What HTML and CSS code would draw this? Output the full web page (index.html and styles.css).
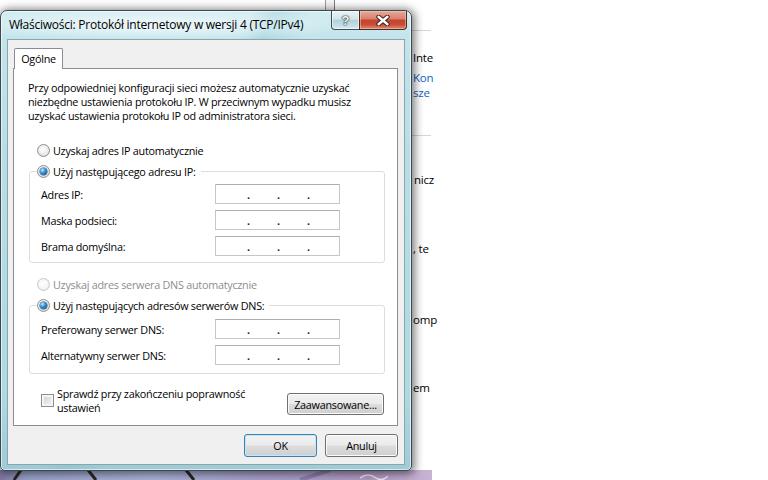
FILE: index.html
```html
<!DOCTYPE html>
<html lang="pl">
<head>
<meta charset="utf-8">
<title>Właściwości: Protokół internetowy w wersji 4 (TCP/IPv4)</title>
<link rel="stylesheet" href="styles.css">
</head>
<body>
<div class="desktop">
  <div class="bgwin">
    <div class="bgwin-edge"></div>
    <div class="bgtext">
      <div class="bg-rule rule-top"></div>
      <p class="bg-line line-inte">Inte</p>
      <p class="bg-line link line-kon">Kon</p>
      <p class="bg-line link">sze</p>
      <div class="bg-rule rule-mid"></div>
      <p class="bg-line line-nicz">nicz</p>
      <p class="bg-line line-te">, te</p>
      <p class="bg-line line-omp">omp</p>
      <p class="bg-line line-em">em</p>
    </div>
  </div>

  <div class="wallpaper">
    <svg width="432" height="10" viewBox="0 0 432 10">
      <defs>
        <linearGradient id="wp" x1="0" y1="0" x2="1" y2="0">
          <stop offset="0" stop-color="#7f76a2"/>
          <stop offset="0.06" stop-color="#9aa2cc"/>
          <stop offset="0.35" stop-color="#aab3d8"/>
          <stop offset="0.6" stop-color="#a79fca"/>
          <stop offset="0.85" stop-color="#b39ac4"/>
          <stop offset="1" stop-color="#c7b4d2"/>
        </linearGradient>
      </defs>
      <rect width="432" height="10" fill="url(#wp)"/>
      <path d="M14 10 L21 0" stroke="#2c2620" stroke-width="3"/>
      <path d="M88 0 L96 10" stroke="#2c2620" stroke-width="3"/>
      <path d="M186 0 L194 10" stroke="#2c2620" stroke-width="3"/>
      <path d="M360 8 q8 -6 16 0 q6 4 12 -2" stroke="#f1e8f4" stroke-width="1.5" fill="none"/>
      <path d="M300 10 L330 0" stroke="#8c7fb0" stroke-width="4"/>
    </svg>
  </div>

  <div class="dialog">
    <div class="titlebar">
      <span class="title">Właściwości: Protokół internetowy w wersji 4 (TCP/IPv4)</span>
      <div class="caption-btns">
        <div class="cbtn help"><span class="help-glyph">?</span></div>
        <div class="cbtn close">
          <svg width="14" height="11" viewBox="0 0 14 11">
            <path d="M2.5 1.8 L11.5 9.2 M11.5 1.8 L2.5 9.2" stroke="#3b1f19" stroke-width="4.4" stroke-linecap="round"/>
            <path d="M2.5 1.8 L11.5 9.2 M11.5 1.8 L2.5 9.2" stroke="#ffffff" stroke-width="2.4" stroke-linecap="round"/>
          </svg>
        </div>
      </div>
    </div>

    <div class="client">
      <div class="tabs"><div class="tab">Ogólne</div></div>
      <div class="panel">
        <p class="desc">Przy odpowiedniej konfiguracji sieci możesz automatycznie uzyskać<br>niezbędne ustawienia protokołu IP. W przeciwnym wypadku musisz<br>uzyskać ustawienia protokołu IP od administratora sieci.</p>

        <div class="option opt-ip-auto"><span class="radio"></span><span>Uzyskaj adres IP automatycznie</span></div>

        <div class="group group-ip">
          <div class="legend"><span class="radio on"></span><span>Użyj następującego adresu IP:</span></div>
          <div class="field first"><span class="label">Adres IP:</span><div class="ipfield"><span>.</span><span>.</span><span>.</span></div></div>
          <div class="field"><span class="label">Maska podsieci:</span><div class="ipfield"><span>.</span><span>.</span><span>.</span></div></div>
          <div class="field"><span class="label">Brama domyślna:</span><div class="ipfield"><span>.</span><span>.</span><span>.</span></div></div>
        </div>

        <div class="option disabled opt-dns-auto"><span class="radio"></span><span>Uzyskaj adres serwera DNS automatycznie</span></div>

        <div class="group group-dns">
          <div class="legend"><span class="radio on"></span><span>Użyj następujących adresów serwerów DNS:</span></div>
          <div class="field first"><span class="label">Preferowany serwer DNS:</span><div class="ipfield"><span>.</span><span>.</span><span>.</span></div></div>
          <div class="field"><span class="label">Alternatywny serwer DNS:</span><div class="ipfield"><span>.</span><span>.</span><span>.</span></div></div>
        </div>

        <div class="validate-row">
          <span class="checkbox"></span>
          <span class="validate-text">Sprawdź przy zakończeniu poprawność<br>ustawień</span>
          <button class="btn advanced">Zaawansowane...</button>
        </div>
      </div>
      <div class="actions">
        <button class="btn default">OK</button>
        <button class="btn">Anuluj</button>
      </div>
    </div>
  </div>
</div>
</body>
</html>
```
FILE: styles.css
```css
* { box-sizing: border-box; }

html, body {
  margin: 0;
  padding: 0;
  background: #ffffff;
}

body {
  width: 768px;
  height: 480px;
  overflow: hidden;
  font-family: "Open Sans", "Noto Sans", sans-serif;
  font-size: 10.8px;
  letter-spacing: -0.25px;
  color: #000;
}

.desktop {
  position: relative;
  width: 768px;
  height: 480px;
  overflow: hidden;
  background: #ffffff;
}

/* ---------- background window ---------- */
.bgwin {
  position: absolute;
  left: 0;
  top: 0;
  width: 434px;
  height: 470px;
  background: #ffffff;
}

.bgwin-edge {
  position: absolute;
  left: 325px;
  top: 0;
  width: 10px;
  height: 12px;
  border-left: 1px solid #9a9a9a;
  border-right: 1px solid #7a7a7a;
  background: #f6f6f6;
}

.bgtext {
  margin-left: 413px;
  padding-top: 30px;
}

.bg-rule {
  height: 1px;
  width: 24px;
  background: #d6d6d6;
  margin-left: -6px;
}

.rule-mid { margin-top: 35px; }

.bg-line {
  margin: 0;
  white-space: nowrap;
  line-height: 15px;
  height: 15px;
  font-size: 11.5px;
  letter-spacing: -0.2px;
  color: #000;
}

.bg-line.link { color: #0b62c4; }

.line-inte { margin-top: 19px; }
.line-kon { margin-top: 5px; }
.line-nicz { margin-top: 36px; margin-left: 1px; }
.line-te { margin-top: 54px; }
.line-omp { margin-top: 56px; }
.line-em { margin-top: 53px; }

/* ---------- wallpaper strip ---------- */
.wallpaper {
  position: absolute;
  left: 0;
  top: 470px;
  width: 432px;
  height: 10px;
}
.wallpaper svg { display: block; }

/* ---------- dialog frame ---------- */
.dialog {
  position: absolute;
  left: 0;
  top: 10px;
  width: 412px;
  height: 461px;
  border: 1px solid #3c474e;
  border-radius: 7px 7px 5px 5px;
  background:
    linear-gradient(115deg, rgba(255,255,255,0) 0 40%, rgba(110,185,200,.25) 44%, rgba(255,255,255,0) 50%),
    linear-gradient(180deg, #d3edf2 0px, #c2e4eb 28px, #b7dee7 140px, #addae3 380px, #9dcbd6 100%);
  box-shadow: inset 0 0 0 1px rgba(255,255,255,.6), 1px 1px 9px 2px rgba(0,0,0,.5);
  display: flex;
  flex-direction: column;
}

.titlebar {
  height: 28px;
  display: flex;
  align-items: flex-start;
  justify-content: space-between;
  background: radial-gradient(ellipse 200px 16px at 150px 14px, rgba(255,255,255,.75), rgba(255,255,255,0));
  border-radius: 6px 6px 0 0;
}

.title {
  margin-left: 8px;
  margin-top: 6px;
  font-size: 12px;
  line-height: 16px;
  white-space: nowrap;
  color: #000;
}

.caption-btns {
  display: flex;
  margin-top: 0;
  margin-right: 4px;
}

.cbtn {
  height: 19px;
  display: flex;
  align-items: center;
  justify-content: center;
  border: 1px solid #3f4d55;
  border-top: none;
}

.cbtn.help {
  width: 28px;
  border-right: none;
  border-radius: 0 0 0 4px;
  background: linear-gradient(180deg, #e9f3f5 0%, #d2e6eb 45%, #b2d2da 52%, #c6e1e8 85%, #d9eef2 100%);
  box-shadow: inset 0 0 0 1px rgba(255,255,255,.55);
}

.help-glyph {
  font-family: "Liberation Sans", sans-serif;
  font-weight: bold;
  font-size: 13px;
  letter-spacing: 0;
  line-height: 13px;
  color: #f4f6f7;
  text-shadow: 0 0 1px #2c3a40, 0 0 1px #2c3a40, 0 0 2px #2c3a40;
}

.cbtn.close {
  width: 48px;
  border-radius: 0 0 4px 0;
  border-color: #4a2820;
  background: linear-gradient(180deg, #e8a898 0%, #d9826f 42%, #c4452d 52%, #c94c34 75%, #e08a72 100%);
  box-shadow: inset 0 0 0 1px rgba(255,220,210,.45);
}
.cbtn.close svg { display: block; }

/* ---------- client area ---------- */
.client {
  margin: 0 6px;
  height: 426px;
  border: 1px solid #8fa3ad;
  background: #f0f0f0;
  display: flex;
  flex-direction: column;
}

.tabs {
  display: flex;
  margin-top: 8px;
  margin-left: 6px;
  position: relative;
  z-index: 1;
}

.tab {
  width: 49px;
  height: 21px;
  margin-bottom: -1px;
  border: 1px solid #898c95;
  border-bottom: none;
  border-radius: 2px 2px 0 0;
  background: #ffffff;
  display: flex;
  align-items: center;
  justify-content: center;
  padding-bottom: 1px;
}

.panel {
  margin-left: 5px;
  margin-right: 6px;
  height: 358px;
  border: 1px solid #898c95;
  background: #ffffff;
  padding: 12px 12px 0 14px;
  display: flex;
  flex-direction: column;
}

.desc {
  margin: 0;
  line-height: 14px;
  white-space: nowrap;
}

.option {
  display: flex;
  align-items: center;
  height: 16px;
  margin-left: 9px;
  gap: 3px;
}

.opt-ip-auto { margin-top: 19px; }
.opt-dns-auto { margin-top: 13px; }

.option.disabled { color: #8d8d8d; }

.radio {
  width: 13px;
  height: 13px;
  flex: none;
  border-radius: 50%;
  border: 1px solid #8e8f8f;
  background: radial-gradient(circle at 45% 40%, #ffffff 0%, #f1f1f1 40%, #cfd2d4 100%);
  display: flex;
  align-items: center;
  justify-content: center;
}

.radio.on::after {
  content: "";
  width: 7px;
  height: 7px;
  border-radius: 50%;
  background: radial-gradient(circle at 35% 30%, #c8f1ff 0%, #3d9fe0 35%, #1a5c99 75%, #0f3d6b 100%);
  box-shadow: 0 0 0 0.5px #29517a;
}

.option.disabled .radio {
  border-color: #c5c7c9;
  background: radial-gradient(circle at 45% 40%, #ffffff 0%, #f6f6f6 50%, #e4e5e6 100%);
}

.group {
  margin-left: 1px;
  width: 356px;
  margin-top: 13px;
  border: 1px solid #d5dfe5;
  border-radius: 3px;
  display: flex;
  flex-direction: column;
}

.group-ip { padding-bottom: 6px; }
.group-dns { padding-bottom: 8px; }

.legend {
  align-self: flex-start;
  display: flex;
  align-items: center;
  gap: 3px;
  height: 16px;
  margin-top: -9px;
  margin-left: 7px;
  padding-right: 5px;
  background: #ffffff;
}

.field {
  display: flex;
  align-items: center;
  height: 20px;
  margin-top: 6px;
  padding-left: 11px;
}

.field.first { margin-top: 5px; }
.group-dns .field.first { margin-top: 6px; }

.label {
  width: 174px;
  flex: none;
}

.ipfield {
  width: 125px;
  height: 20px;
  border: 1px solid #c3c7cc;
  border-top-color: #abadb3;
  background: #ffffff;
  display: flex;
  align-items: flex-end;
  padding-left: 31px;
  padding-bottom: 3px;
  line-height: 10px;
}

.ipfield span {
  width: 30px;
  flex: none;
  font-weight: bold;
  color: #222;
}

.validate-row {
  display: flex;
  align-items: flex-start;
  margin-top: 13px;
  margin-left: 13px;
}

.checkbox {
  width: 13px;
  height: 13px;
  flex: none;
  margin-top: 7px;
  border: 1px solid #8e8f8f;
  background: linear-gradient(135deg, #c9ccd1 0%, #e6e7e9 60%, #f7f7f7 100%);
  box-shadow: inset 0 0 0 2px #f4f4f4;
}

.validate-text {
  margin-left: 3px;
  line-height: 14px;
  white-space: nowrap;
}

.btn {
  font-family: inherit;
  font-size: inherit;
  letter-spacing: inherit;
  color: #000;
  height: 23px;
  padding: 0;
  border: 1px solid #707070;
  border-radius: 3px;
  background: linear-gradient(180deg, #f2f2f2 0%, #ebebeb 49%, #dddddd 51%, #cfcfcf 100%);
  box-shadow: inset 0 0 0 1px #fbfbfb;
  display: flex;
  align-items: center;
  justify-content: center;
}

.btn.advanced {
  width: 97px;
  height: 22px;
  margin-left: auto;
  margin-right: 1px;
  margin-top: 6px;
}

.actions {
  display: flex;
  justify-content: flex-end;
  gap: 8px;
  margin-top: 8px;
  padding-right: 6px;
}

.actions .btn { width: 73px; }

.btn.default {
  border-color: #3c7fb1;
  box-shadow: inset 0 0 0 1px #c3e7f8;
}
```
